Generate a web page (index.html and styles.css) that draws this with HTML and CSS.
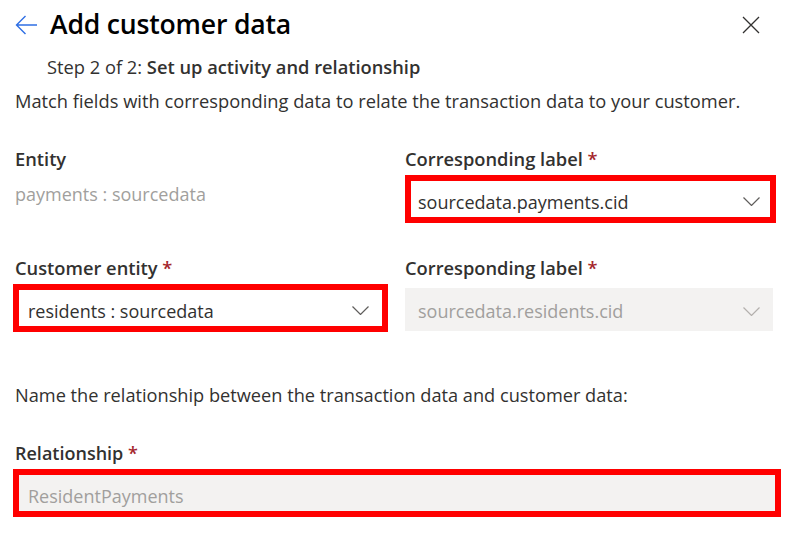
FILE: index.html
```html
<!DOCTYPE html>
<html lang="en">
<head>
<meta charset="utf-8">
<title>Add customer data</title>
<link rel="stylesheet" href="styles.css">
</head>
<body>
<div class="panel">
  <header class="head">
    <span class="back" aria-label="Back">
      <svg width="23" height="20" viewBox="0 0 23 20"><path d="M22 10H1.5M10.5 1L1.5 10l9 9" fill="none" stroke="#2f6fe4" stroke-width="1.4"/></svg>
    </span>
    <h1 class="title">Add customer data</h1>
    <span class="close" aria-label="Close">
      <svg width="18" height="18" viewBox="0 0 18 18"><path d="M1 1L17 17M17 1L1 17" fill="none" stroke="#323130" stroke-width="1.3"/></svg>
    </span>
  </header>
  <p class="step">Step 2 of 2: <b>Set up activity and relationship</b></p>
  <p class="intro">Match fields with corresponding data to relate the transaction data to your customer.</p>

  <div class="grid">
    <div class="field">
      <div class="label">Entity</div>
      <div class="static">payments : sourcedata</div>
    </div>
    <div class="field">
      <div class="label">Corresponding label <span class="req">*</span></div>
      <div class="hl hl-a">
        <div class="dropdown dd-a">
          <span>sourcedata.payments.cid</span>
          <svg class="chev" width="17" height="9" viewBox="0 0 17 9"><path d="M0.5 0.5L8.5 8.5L16.5 0.5" fill="none" stroke="#605e5c" stroke-width="1.2"/></svg>
        </div>
      </div>
    </div>
    <div class="field row2">
      <div class="label">Customer entity <span class="req">*</span></div>
      <div class="hl hl-b">
        <div class="dropdown dd-b">
          <span>residents : sourcedata</span>
          <svg class="chev" width="17" height="9" viewBox="0 0 17 9"><path d="M0.5 0.5L8.5 8.5L16.5 0.5" fill="none" stroke="#605e5c" stroke-width="1.2"/></svg>
        </div>
      </div>
    </div>
    <div class="field row2">
      <div class="label">Corresponding label <span class="req">*</span></div>
      <div class="dropdown disabled">
        <span>sourcedata.residents.cid</span>
        <svg class="chev" width="17" height="9" viewBox="0 0 17 9"><path d="M0.5 0.5L8.5 8.5L16.5 0.5" fill="none" stroke="#b3b0ad" stroke-width="1.2"/></svg>
      </div>
    </div>
  </div>

  <p class="name">Name the relationship between the transaction data and customer data:</p>
  <div class="label label-rel">Relationship <span class="req">*</span></div>
  <div class="hl hl-c">
    <div class="textfield">ResidentPayments</div>
  </div>
</div>
</body>
</html>
```

FILE: styles.css
```css
html, body {
  margin: 0;
  padding: 0;
  background: #ffffff;
}

body {
  font-family: "Open Sans", "Noto Sans", "Liberation Sans", sans-serif;
  color: #323130;
}

.panel {
  width: 795px;
  height: 559px;
  box-sizing: border-box;
  padding: 6px 0 0 15px;
  overflow: hidden;
}

.head {
  display: flex;
  align-items: center;
  height: 36px;
  width: 745px;
}

.back {
  display: flex;
  width: 23px;
  height: 20px;
  margin-top: 2px;
}

.title {
  margin: 0 0 0 12px;
  font-size: 26.6px;
  line-height: 36px;
  font-weight: 600;
  color: #000000;
  letter-spacing: -0.2px;
  flex: 1;
}

.close {
  display: flex;
  width: 18px;
  height: 18px;
  margin-top: 2px;
}

.step {
  margin: 13px 0 0 32px;
  font-size: 18.3px;
  line-height: 24px;
  color: #323130;
}

.step b {
  font-weight: 600;
}

.intro {
  margin: 10px 0 0 0;
  font-size: 18.3px;
  line-height: 24px;
}

.grid {
  display: grid;
  grid-template-columns: 375px 370px;
  column-gap: 15px;
  margin-top: 34px;
}

.field {
  display: flex;
  flex-direction: column;
}

.row2 {
  margin-top: 33px;
}

.label {
  font-size: 18.3px;
  line-height: 24px;
  font-weight: 600;
  color: #323130;
}

.req {
  color: #a4262c;
}

.static {
  margin-top: 11px;
  font-size: 18px;
  line-height: 24px;
  color: #a19f9d;
}

.hl {
  border: 6px solid #ff0000;
}

.hl-a {
  margin-top: 4px;
  width: 359px;
}

.hl-b {
  margin-top: 4px;
  margin-left: -2px;
  width: 363px;
}

.hl-c {
  margin-left: -2px;
  margin-top: 4px;
  width: 756px;
}

.dropdown {
  display: flex;
  align-items: center;
  justify-content: space-between;
  height: 36px;
  box-sizing: border-box;
  font-size: 18px;
  line-height: 24px;
  background: #ffffff;
}

.dd-a {
  padding: 5px 10px 0 7px;
}

.dd-b {
  padding: 5px 13px 0 9px;
}

.chev {
  display: block;
}

.dropdown.disabled {
  margin-top: 8px;
  height: 43px;
  width: 368px;
  padding: 3px 13px 0 13px;
  background: #f3f2f1;
  color: #a19f9d;
}

.name {
  margin: 51px 0 0 0;
  font-size: 18.2px;
  line-height: 24px;
}

.label-rel {
  margin-top: 34px;
  font-size: 18px;
}

.textfield {
  height: 36px;
  box-sizing: border-box;
  padding: 9px 9px 0 9px;
  font-size: 18px;
  line-height: 24px;
  background: #f3f2f1;
  color: #a19f9d;
}
```
